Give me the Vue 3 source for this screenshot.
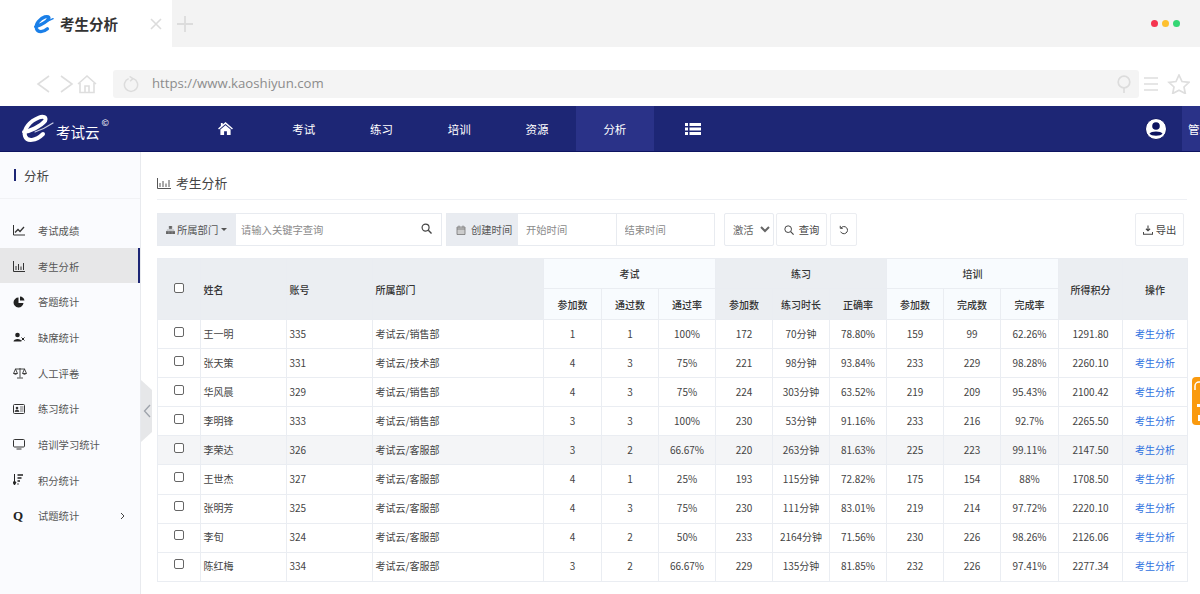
<script setup>
const navItems = [
  { key: 'home', icon: true },
  { key: 'exam', label: '考试' },
  { key: 'practice', label: '练习' },
  { key: 'train', label: '培训' },
  { key: 'res', label: '资源' },
  { key: 'analysis', label: '分析', active: true },
  { key: 'list', icon: true },
]

const sideItems = [
  { label: '考试成绩', icon: 'line' },
  { label: '考生分析', icon: 'bar', active: true },
  { label: '答题统计', icon: 'pie' },
  { label: '缺席统计', icon: 'userx' },
  { label: '人工评卷', icon: 'scale' },
  { label: '练习统计', icon: 'card' },
  { label: '培训学习统计', icon: 'monitor' },
  { label: '积分统计', icon: 'sort' },
  { label: '试题统计', icon: 'q', more: true },
]

const rows = [
  ['王一明', 335, '考试云/销售部', 1, 1, '100%', 172, '70分钟', '78.80%', 159, 99, '62.26%', '1291.80'],
  ['张天策', 331, '考试云/技术部', 4, 3, '75%', 221, '98分钟', '93.84%', 233, 229, '98.28%', '2260.10'],
  ['华风晨', 329, '考试云/销售部', 4, 3, '75%', 224, '303分钟', '63.52%', 219, 209, '95.43%', '2100.42'],
  ['李明锋', 333, '考试云/销售部', 3, 3, '100%', 230, '53分钟', '91.16%', 233, 216, '92.7%', '2265.50'],
  ['李荣达', 326, '考试云/客服部', 3, 2, '66.67%', 220, '263分钟', '81.63%', 225, 223, '99.11%', '2147.50'],
  ['王世杰', 327, '考试云/客服部', 4, 1, '25%', 193, '115分钟', '72.82%', 175, 154, '88%', '1708.50'],
  ['张明芳', 325, '考试云/客服部', 4, 3, '75%', 230, '111分钟', '83.01%', 219, 214, '97.72%', '2220.10'],
  ['李旬', 324, '考试云/客服部', 4, 2, '50%', 233, '2164分钟', '71.56%', 230, 226, '98.26%', '2126.06'],
  ['陈红梅', 334, '考试云/客服部', 3, 2, '66.67%', 229, '135分钟', '81.85%', 232, 226, '97.41%', '2277.34'],
]

const colWidths = [43, 86, 86, 171, 58, 57, 57, 57, 57, 57, 57, 57, 58, 64, 65]
</script>

<template>
  <div class="page">
    <div class="tabs">
      <div class="tab">
        <svg class="tab-logo" viewBox="0 0 24 24" width="21" height="21">
          <path d="M3 15.500C6.500 14.500 15 11 18 6.500C19 4.500 16.500 3.500 13.500 4.500C7.500 6.500 2.500 12.500 4 18C5.500 22.500 12 22 16.500 18" fill="none" stroke="#1a7fe8" stroke-width="3.800" stroke-linecap="round" />
          <path d="M13 11L23 6.500" stroke="#1a7fe8" stroke-width="1.600" stroke-linecap="round" />
        </svg>
        <span class="tab-title">考生分析</span>
        <svg class="tab-close" viewBox="0 0 12 12" width="12" height="12">
          <path d="M1 1L11 11M11 1L1 11" stroke="#dcdcdc" stroke-width="1.600" />
        </svg>
      </div>
      <svg class="tab-plus" viewBox="0 0 16 16" width="16" height="16">
        <path d="M8 0V16M0 8H16" stroke="#dcdcdc" stroke-width="1.800" />
      </svg>
      <div class="dots">
        <i class="dot red"></i>
        <i class="dot yellow"></i>
        <i class="dot green"></i>
      </div>
    </div>

    <div class="addr-row">
      <svg class="addr-nav" viewBox="0 0 62 20" width="62" height="20">
        <path d="M13 2L2 10L13 18M25 2L36 10L25 18" fill="none" stroke="#dedede" stroke-width="1.600" />
        <path d="M42 10L51 2L60 10M44 9V18.500H58V9M49 18.500V12H53V18.500" fill="none" stroke="#dedede" stroke-width="1.600" />
      </svg>
      <div class="addr-bar">
        <svg viewBox="0 0 18 18" width="17" height="17">
          <path d="M11 2.800A7 7 0 1 1 6 2.800M7 0.500L10.500 2.800L7.500 5.500" fill="none" stroke="#dcdcdc" stroke-width="1.600" />
        </svg>
        <span class="url">https://www.kaoshiyun.com</span>
        <svg class="addr-pin" viewBox="0 0 14 18" width="14" height="18">
          <circle cx="7" cy="7" r="5.800" fill="none" stroke="#dcdcdc" stroke-width="1.700" />
          <path d="M7 13V18" stroke="#dcdcdc" stroke-width="1.700" />
        </svg>
      </div>
      <svg class="addr-tools" viewBox="0 0 46 20" width="46" height="20">
        <path d="M0 4H14M0 10H14M0 16H14" stroke="#dedede" stroke-width="1.700" />
        <path d="M35 1L38 7.500L45 8.300L40 13L41.300 19.500L35 16.300L28.700 19.500L30 13L25 8.300L32 7.500Z" fill="none" stroke="#dedede" stroke-width="1.700" />
      </svg>
    </div>

    <header class="topnav">
      <div class="brand">
        <svg viewBox="0 0 34 30" width="34" height="30">
          <path d="M3 18C9 17 19 13 24 7C26 3 22 2 18 3.500C9 7 2 15 4 22C6 28 15 27 22 20" fill="none" stroke="#fff" stroke-width="4" stroke-linecap="round" />
          <path d="M14 18C20 16 26 13 32 9" stroke="#c9cde6" stroke-width="1.200" stroke-linecap="round" />
        </svg>
        <span class="brand-name">考试云</span>
        <sup class="brand-mark">©</sup>
      </div>
      <nav class="nav">
        <a v-for="item in navItems" :key="item.key" class="nav-item" :class="{ active: item.active }">
          <svg v-if="item.key === 'home'" viewBox="0 0 16 14" width="15" height="13">
            <path d="M8 0L16 7L15 8.200L8 2.200L1 8.200L0 7L3 4.400V1H5V2.700Z" fill="#fff" />
            <path d="M8 3.500L13.500 8.200V14H9.500V10H6.500V14H2.500V8.200Z" fill="#fff" />
          </svg>
          <svg v-else-if="item.key === 'list'" viewBox="0 0 16 12" width="16" height="12">
            <path d="M0 0H3V3H0ZM4.500 0H16V3H4.500ZM0 4.500H3V7.500H0ZM4.500 4.500H16V7.500H4.500ZM0 9H3V12H0ZM4.500 9H16V12H4.500Z" fill="#fff" />
          </svg>
          <template v-else>{{ item.label }}</template>
        </a>
      </nav>
      <div class="nav-right">
        <svg viewBox="0 0 22 22" width="22" height="22">
          <circle cx="11" cy="11" r="10.500" fill="#fff" stroke="#0d1460" stroke-width="1" />
          <circle cx="11" cy="8" r="3.800" fill="#0d1460" />
          <path d="M4.500 15.500C6 12.800 16 12.800 17.500 15.500C16 18.500 6 18.500 4.500 15.500Z" fill="#0d1460" />
        </svg>
        <span class="admin">管理员</span>
      </div>
    </header>

    <div class="content">
      <aside class="side">
        <div class="side-head"><i class="side-bar"></i>分析</div>
        <ul class="side-list">
          <li v-for="item in sideItems" :key="item.label" class="side-item" :class="{ active: item.active }">
            <span class="side-icon">
              <svg v-if="item.icon === 'line'" viewBox="0 0 12 12" width="12" height="12">
                <path d="M0.500 1V11H12" fill="none" stroke="#333" stroke-width="1" />
                <path d="M2 8.500L5 5.500L7 7.500L11 3" fill="none" stroke="#333" stroke-width="1.300" />
              </svg>
              <svg v-else-if="item.icon === 'bar'" viewBox="0 0 12 12" width="12" height="12">
                <path d="M0.500 1V11.500H12" fill="none" stroke="#333" stroke-width="1" />
                <path d="M3 6V10M5.500 4V10M8 6.500V10M10.500 3V10" stroke="#333" stroke-width="1" />
              </svg>
              <svg v-else-if="item.icon === 'pie'" viewBox="0 0 12 12" width="12" height="12">
                <path d="M5.500 1.500A5 5 0 1 0 10.500 7H5.500Z" fill="#222" />
                <path d="M7 0.500A5 5 0 0 1 11.500 4.500H7Z" fill="#222" />
              </svg>
              <svg v-else-if="item.icon === 'userx'" viewBox="0 0 12 12" width="12" height="12">
                <circle cx="4.500" cy="4" r="2.300" fill="#222" />
                <path d="M0.500 10.500C0.500 7 8.500 7 8.500 10.500Z" fill="#222" />
                <path d="M8.500 6.500L11.500 9.500M11.500 6.500L8.500 9.500" stroke="#222" stroke-width="1" />
              </svg>
              <svg v-else-if="item.icon === 'scale'" viewBox="0 0 14 12" width="14" height="12">
                <path d="M7 1V10.500M4 11H10M2 2H12M2.500 2L0.500 6.500H4.500ZM11.500 2L9.500 6.500H13.500Z" fill="none" stroke="#333" stroke-width="0.900" />
                <path d="M0.500 6.500C1 8 4 8 4.500 6.500ZM9.500 6.500C10 8 13 8 13.500 6.500Z" fill="#333" />
              </svg>
              <svg v-else-if="item.icon === 'card'" viewBox="0 0 12 10" width="12" height="10">
                <rect x="0.500" y="0.500" width="11" height="9" rx="1" fill="none" stroke="#333" />
                <circle cx="4" cy="4" r="1.300" fill="#333" />
                <path d="M2 7.500C2 5.500 6 5.500 6 7.500ZM7 3H10.500M7 5H10.500M7 7H10.500" fill="#333" stroke="#333" stroke-width="0.700" />
              </svg>
              <svg v-else-if="item.icon === 'monitor'" viewBox="0 0 12 11" width="12" height="11">
                <rect x="0.500" y="0.500" width="11" height="7.500" rx="1" fill="none" stroke="#333" />
                <path d="M3.500 10H8.500" stroke="#333" />
              </svg>
              <svg v-else-if="item.icon === 'sort'" viewBox="0 0 10 12" width="10" height="12">
                <path d="M1.500 0V9M0 8L1.500 11L3 8Z" fill="#222" stroke="#222" />
                <path d="M4.500 1H10M4.500 4H8.500M4.500 7H7M4.500 10H5.500" stroke="#222" stroke-width="1.300" />
              </svg>
              <b v-else class="side-q">Q</b>
            </span>
            <span>{{ item.label }}</span>
            <svg v-if="item.more" class="side-more" viewBox="0 0 5 8" width="5" height="8">
              <path d="M1 1L4 4L1 7" fill="none" stroke="#444" stroke-width="1" />
            </svg>
          </li>
        </ul>
      </aside>

      <main class="main">
        <div class="handle">
          <svg viewBox="0 0 8 14" width="8" height="14">
            <path d="M7 1L1.500 7L7 13" fill="none" stroke="#9ea3ab" stroke-width="1.300" />
          </svg>
        </div>

        <h2 class="title">
          <svg viewBox="0 0 14 12" width="14" height="12">
            <path d="M0.500 1V11.500H14" fill="none" stroke="#555" stroke-width="1" />
            <path d="M3 6V10M6 4V10M9 6.500V10M12 3V10" stroke="#555" stroke-width="1" />
          </svg>
          考生分析
        </h2>

        <div class="toolbar">
          <div class="group dept">
            <span class="addon">
              <svg viewBox="0 0 10 9" width="9" height="8">
                <path d="M3.500 0H6.500V3H3.500ZM0 6H3V9H0ZM3.500 6H6.500V9H3.500ZM7 6H10V9H7ZM1 4.500H9" fill="#666" stroke="#666" stroke-width="0.500" />
              </svg>
              所属部门
              <i class="caret"></i>
            </span>
            <input class="field" type="text" placeholder="请输入关键字查询" />
            <svg class="search" viewBox="0 0 12 12" width="11" height="11">
              <circle cx="5" cy="5" r="3.800" fill="none" stroke="#444" stroke-width="1.300" />
              <path d="M8 8L11.500 11.500" stroke="#444" stroke-width="1.500" />
            </svg>
          </div>
          <div class="group range">
            <span class="addon date">
              <svg viewBox="0 0 10 10" width="10" height="10">
                <path d="M1 2H9V9.500H1ZM1 4H9M3 0.500V2.500M7 0.500V2.500" fill="#ccc" stroke="#777" stroke-width="0.800" />
              </svg>
              创建时间
            </span>
            <input class="field" type="text" placeholder="开始时间" />
            <input class="field end" type="text" placeholder="结束时间" />
          </div>
          <select class="status">
            <option>激活</option>
          </select>
          <button class="btn query" type="button">
            <svg viewBox="0 0 12 12" width="10" height="10">
              <circle cx="5" cy="5" r="4" fill="none" stroke="#444" stroke-width="1.200" />
              <path d="M8 8L11.500 11.500" stroke="#444" stroke-width="1.400" />
            </svg>
            查询
          </button>
          <button class="btn reset" type="button">
            <svg viewBox="0 0 12 12" width="10" height="10">
              <path d="M2.500 3.500A4.300 4.300 0 1 1 2 8M1.500 1V4H4.500" fill="none" stroke="#444" stroke-width="1.200" />
            </svg>
          </button>
          <button class="btn export" type="button">
            <svg viewBox="0 0 12 12" width="10" height="10">
              <path d="M6 0.500V6.500M3.500 4.500L6 7L8.500 4.500M0.500 8.500V11H11.500V8.500" fill="none" stroke="#444" stroke-width="1.300" />
            </svg>
            导出
          </button>
        </div>

        <table class="grid">
          <colgroup>
            <col v-for="(w, i) in colWidths" :key="i" :style="{ width: w + 'px' }" />
          </colgroup>
          <thead>
            <tr class="head-top">
              <th rowspan="2" class="check-cell"><i class="check"></i></th>
              <th rowspan="2" class="left">姓名</th>
              <th rowspan="2" class="left">账号</th>
              <th rowspan="2" class="left">所属部门</th>
              <th colspan="3" class="light">考试</th>
              <th colspan="3">练习</th>
              <th colspan="3" class="light">培训</th>
              <th rowspan="2">所得积分</th>
              <th rowspan="2">操作</th>
            </tr>
            <tr class="head-sub">
              <th class="light">参加数</th>
              <th class="light">通过数</th>
              <th class="light">通过率</th>
              <th>参加数</th>
              <th>练习时长</th>
              <th>正确率</th>
              <th class="light">参加数</th>
              <th class="light">完成数</th>
              <th class="light">完成率</th>
            </tr>
          </thead>
          <tbody>
            <tr v-for="(row, r) in rows" :key="r" :class="{ hover: r === 4 }">
              <td class="check-cell"><i class="check"></i></td>
              <td v-for="(cell, c) in row" :key="c" :class="{ left: c < 3 }">{{ cell }}</td>
              <td><a class="link">考生分析</a></td>
            </tr>
          </tbody>
        </table>

        <div class="float-tab">
          <svg viewBox="0 0 8 48" width="8" height="48">
            <path d="M3 13V9A4 4 0 0 1 11 9V13" fill="none" stroke="#fff" stroke-width="1.500" />
            <path d="M5 27H8V30H5ZM6 38H8V44H6Z" fill="#fff" />
          </svg>
        </div>
      </main>
    </div>
  </div>
</template>

<style scoped>
.page {
  width: 1200px;
  height: 594px;
  overflow: hidden;
  background: #fff;
  color: #444;
  font-family: "Noto Sans CJK SC", "Open Sans", sans-serif;
}

.tabs {
  height: 47px;
  display: flex;
  align-items: center;
  background: #f3f3f3;
}
.tab {
  width: 172px;
  height: 47px;
  padding-left: 33px;
  box-sizing: border-box;
  display: flex;
  align-items: center;
  background: #fff;
}
.tab-title {
  margin-left: 6px;
  font-size: 14.500px;
  font-weight: 700;
  color: #333;
}
.tab-close {
  margin-left: 32px;
}
.tab-plus {
  margin-left: 5px;
}
.dots {
  margin-left: auto;
  margin-right: 20px;
  display: flex;
  gap: 4px;
}
.dot {
  width: 7px;
  height: 7px;
  border-radius: 50%;
}
.red { background: #f5344f; }
.yellow { background: #fdc02f; }
.green { background: #34d774; }

.addr-row {
  height: 59px;
  padding: 23px 0 8px 36px;
  box-sizing: border-box;
  display: flex;
  align-items: center;
}
.addr-nav {
  flex: none;
}
.addr-bar {
  width: 1026px;
  height: 28px;
  margin-left: 15px;
  padding: 0 8px 0 10px;
  box-sizing: border-box;
  display: flex;
  align-items: center;
  border-radius: 3px;
  background: #f4f4f4;
}
.url {
  margin: -2px 0 0 12px;
  font-family: "Open Sans", sans-serif;
  font-size: 13.200px;
  color: #8c8c8c;
}
.addr-pin {
  margin-left: auto;
}
.addr-tools {
  margin-left: 5px;
  flex: none;
}

.topnav {
  height: 46px;
  display: flex;
  background: #1d2675;
  border-bottom: 1px solid #0d1460;
  box-sizing: border-box;
  color: #fff;
}
.brand {
  width: 187px;
  padding-left: 21px;
  box-sizing: border-box;
  display: flex;
  align-items: center;
}
.brand-name {
  margin: 5px 0 0 1px;
  font-size: 14.500px;
}
.brand-mark {
  margin: -12px 0 0 2px;
  font-size: 9px;
}
.nav {
  display: flex;
}
.nav-item {
  width: 77.800px;
  display: flex;
  align-items: center;
  justify-content: center;
  font-size: 11.500px;
}
.nav-item.active {
  background: #2a3288;
}
.nav-right {
  margin-left: auto;
  display: flex;
  align-items: center;
  width: 55px;
  flex: none;
  overflow: hidden;
  white-space: nowrap;
}
.nav-right svg {
  flex: none;
}
.admin {
  flex: none;
  margin-left: 15px;
  padding: 0 6px;
  height: 100%;
  display: flex;
  align-items: center;
  background: #2a3288;
  font-size: 11.500px;
}

.content {
  height: 442px;
  display: flex;
}
.side {
  width: 141px;
  flex: none;
  box-sizing: border-box;
  background: #fafbfe;
  border-right: 1px solid #e8eaee;
}
.side-head {
  height: 47px;
  display: flex;
  align-items: center;
  padding-left: 14px;
  font-size: 12.500px;
  color: #444;
  border-bottom: 1px solid #f1f2f5;
  box-sizing: border-box;
}
.side-bar {
  width: 2px;
  height: 12px;
  margin-right: 8px;
  background: #1d2675;
}
.side-list {
  list-style: none;
  margin: 13px 0 0;
  padding: 0;
}
.side-item {
  height: 35.700px;
  padding-top: 1px;
  box-sizing: border-box;
  display: flex;
  align-items: center;
  font-size: 10.300px;
  color: #555;
}
.side-item.active {
  background: #e7e7e8;
  border-right: 2px solid #1d2675;
}
.side-icon {
  width: 38px;
  padding-left: 13px;
  box-sizing: border-box;
  flex: none;
  display: flex;
  align-items: center;
}
.side-q {
  font-family: "Liberation Serif", serif;
  font-size: 13px;
  color: #222;
}
.side-more {
  margin-left: 41px;
}

.main {
  flex: 1;
  min-width: 0;
  position: relative;
  padding: 0 13px 0 16px;
}
.handle {
  position: absolute;
  left: 0;
  top: 228px;
  width: 11px;
  height: 62px;
  display: flex;
  align-items: center;
  justify-content: center;
  background: #e6e7e9;
  clip-path: polygon(0 0, 100% 16%, 100% 84%, 0 100%);
}
.title {
  height: 48px;
  margin: 0;
  padding-top: 14px;
  display: flex;
  align-items: center;
  gap: 5px;
  box-sizing: border-box;
  border-bottom: 1px solid #eef0f4;
  font-size: 12.800px;
  font-weight: 400;
  color: #444;
}
.toolbar {
  height: 33px;
  margin-top: 13px;
  display: flex;
  font-size: 10.300px;
}
.group {
  display: flex;
  position: relative;
  box-sizing: border-box;
  border: 1px solid #e8ebf0;
}
.dept {
  width: 285px;
}
.range {
  width: 269px;
  margin-left: 4px;
}
.addon {
  flex: none;
  display: flex;
  align-items: center;
  gap: 2px;
  padding-left: 8px;
  box-sizing: border-box;
  background: #e9ecf1;
  color: #555;
  width: 78px;
}
.addon.date {
  width: 71px;
  padding-left: 9px;
  gap: 5px;
}
.caret {
  border: 3px solid transparent;
  border-top-color: #555;
  border-bottom: 0;
  margin-left: 1px;
}
.field {
  flex: 1;
  min-width: 0;
  border: 0;
  outline: 0;
  padding: 0 5px;
  font: inherit;
  color: #444;
  background: #fff;
}
.range .field {
  padding: 0 8px;
}
.field.end {
  border-left: 1px solid #e8ebf0;
}
.field::placeholder {
  color: #8a8a8a;
}
.search {
  position: absolute;
  right: 9px;
  top: 9px;
}
.status {
  width: 50px;
  height: 33px;
  margin-left: 9px;
  padding-left: 4px;
  border: 1px solid #e8ebf0;
  border-radius: 2px;
  background: #fff;
  font: inherit;
  color: #666;
  outline: 0;
}
.btn {
  height: 33px;
  display: flex;
  align-items: center;
  justify-content: center;
  gap: 5px;
  padding: 0;
  border: 1px solid #ebedf1;
  border-radius: 2px;
  background: #fff;
  font: inherit;
  color: #444;
}
.query {
  width: 51px;
  margin-left: 2px;
}
.reset {
  width: 27px;
  margin-left: 3px;
}
.export {
  width: 49px;
  margin-left: auto;
  margin-right: 3px;
  gap: 3px;
}

.grid {
  width: 1030px;
  margin-top: 12px;
  table-layout: fixed;
  border-collapse: collapse;
  font-size: 10px;
  color: #444;
}
.grid th,
.grid td {
  padding: 0;
  text-align: center;
  border: 1px solid #eaedf2;
}
.grid td {
  padding-bottom: 2px;
}
.grid th {
  background: #ebeef2;
  font-weight: 500;
  color: #333;
}
.grid th.light {
  background: #f8fbfe;
}
.grid .left {
  text-align: left;
  padding-left: 2.500px;
}
.grid .check-cell {
  padding-right: 1px;
}
.head-top {
  height: 30px;
}
.head-sub {
  height: 31px;
}
.grid tbody tr {
  height: 29.100px;
}
.grid tr.hover td {
  background: #f4f5f7;
}
.check {
  display: inline-block;
  width: 10px;
  height: 10px;
  box-sizing: border-box;
  border: 1px solid #666;
  border-radius: 2px;
  background: #fff;
  vertical-align: 1px;
}
.link {
  color: #2f72e0;
}
.float-tab {
  position: absolute;
  right: 0;
  top: 225px;
  width: 8px;
  height: 48px;
  overflow: hidden;
  border-radius: 4px 0 0 4px;
  background: #fa9a0e;
}
</style>

<style>
html, body {
  margin: 0;
  background: #fff;
}
</style>
